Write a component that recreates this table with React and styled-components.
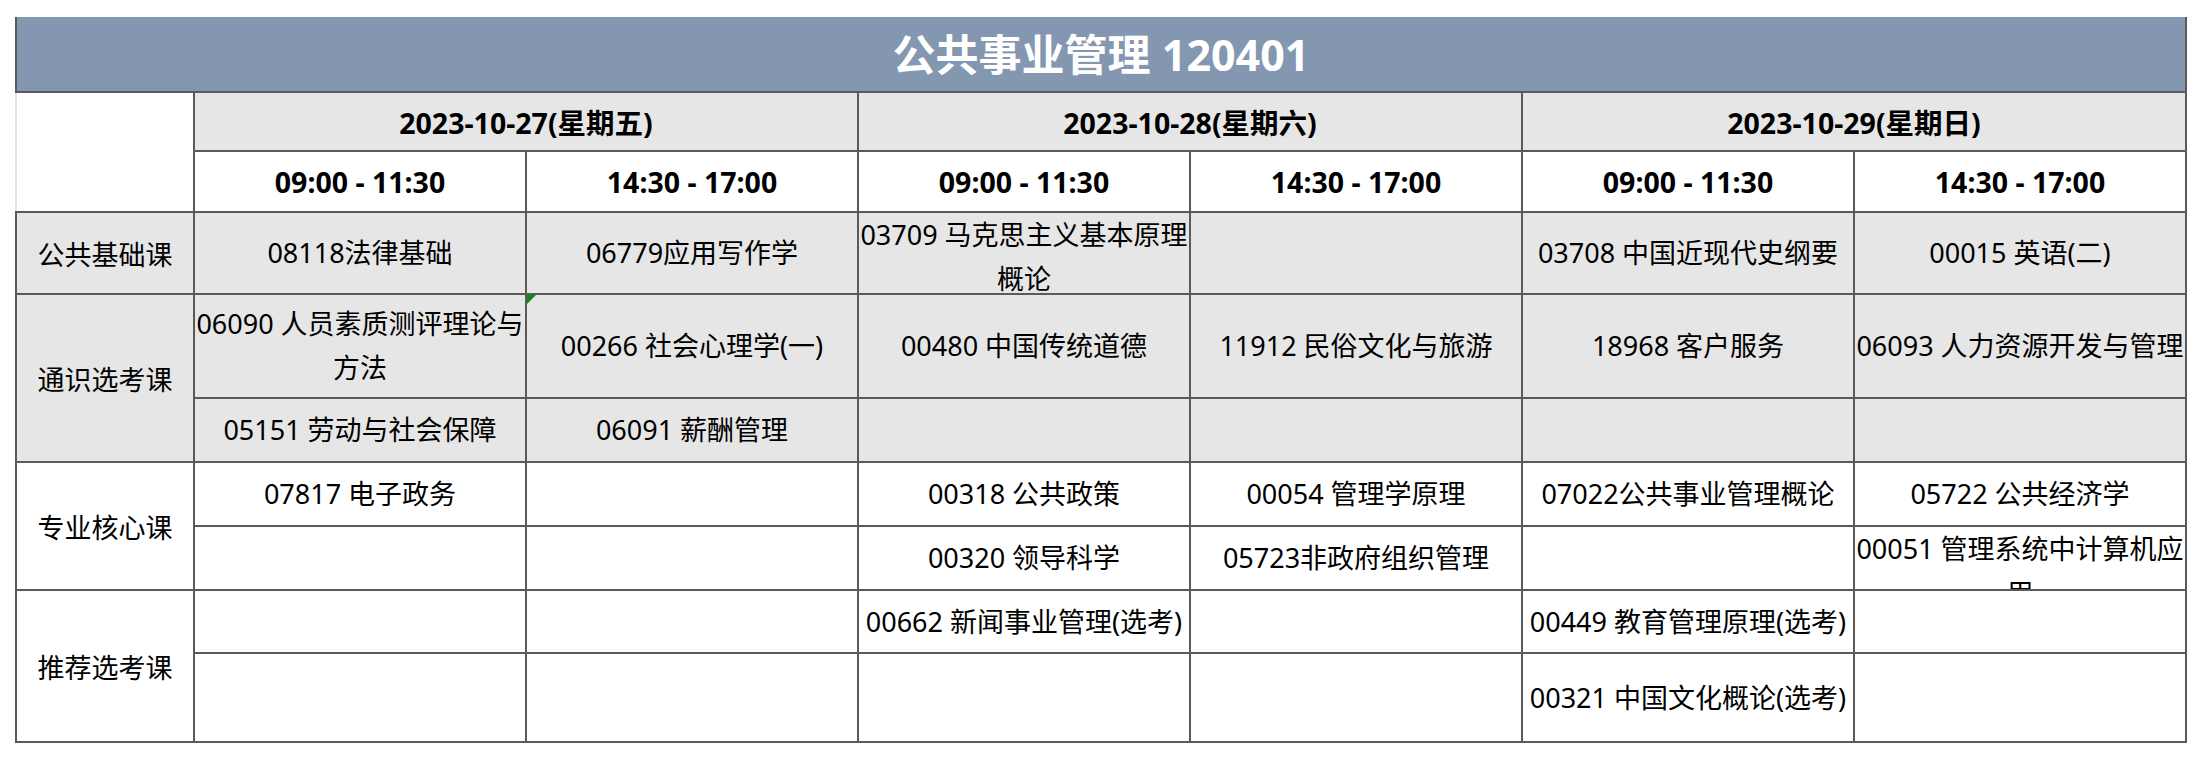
import React from 'react';
import styled, { createGlobalStyle } from 'styled-components';

const GlobalStyle = createGlobalStyle`
  body {
    margin: 0;
    background: #fff;
  }
`;

const FONT = `"Noto Sans", "Noto Sans CJK SC", sans-serif`;
const GREY = '#e7e6e6';

const Sheet = styled.div`
  margin: 17px 0 0 15px;
  width: 2172px;
  box-sizing: border-box;
  display: grid;
  grid-template-columns: 176px repeat(6, 330px);
  grid-template-rows: 74px 57px 59px 80px 102px 62px 62px 62px 61px 87px;
  gap: 2px;
  padding: 0 2px 2px;
  background: #5a5a5a;
  font-family: ${FONT};
  color: #000;
`;

const Title = styled.div`
  grid-column: 1 / -1;
  display: flex;
  align-items: center;
  justify-content: center;
  background: #8497b0;
  color: #fff;
  font-size: 43px;
  font-weight: 700;
  line-height: 1;
`;

const Corner = styled.div`
  grid-row: span 2;
  margin-left: -2px;
  border-left: 2px solid #e4e4e4;
  background: #fff;
`;

const Head = styled.div`
  grid-column: span ${p => p.$span || 1};
  display: flex;
  align-items: center;
  justify-content: center;
  background: ${p => (p.$shade ? GREY : '#fff')};
  font-size: 28.5px;
  font-weight: 700;
`;

const Label = styled.div`
  grid-row: span ${p => p.$span};
  display: flex;
  align-items: center;
  justify-content: center;
  background: ${p => (p.$shade ? GREY : '#fff')};
  font-size: 27px;
`;

const Cell = styled.div`
  position: relative;
  display: flex;
  overflow: hidden;
  background: ${p => (p.$shade ? GREY : '#fff')};
`;

const Text = styled.div`
  margin: auto;
  white-space: pre;
  text-align: center;
  font-size: 27px;
  line-height: 44px;
`;

const Flag = styled.span`
  position: absolute;
  top: 0;
  left: 0;
  width: 0;
  height: 0;
  border-top: 9px solid #108a10;
  border-right: 9px solid transparent;
`;

const days = ['2023-10-27(星期五)', '2023-10-28(星期六)', '2023-10-29(星期日)'];
const slots = ['09:00 - 11:30', '14:30 - 17:00'];

const sections = [
  {
    label: '公共基础课',
    shade: true,
    rows: [
      ['08118法律基础', '06779应用写作学', '03709 马克思主义基本原理\n概论', '', '03708 中国近现代史纲要', '00015 英语(二)'],
    ],
  },
  {
    label: '通识选考课',
    shade: true,
    rows: [
      ['06090 人员素质测评理论与\n方法', '00266 社会心理学(一)', '00480 中国传统道德', '11912 民俗文化与旅游', '18968 客户服务', '06093 人力资源开发与管理'],
      ['05151 劳动与社会保障', '06091 薪酬管理', '', '', '', ''],
    ],
  },
  {
    label: '专业核心课',
    rows: [
      ['07817 电子政务', '', '00318 公共政策', '00054 管理学原理', '07022公共事业管理概论', '05722 公共经济学'],
      ['', '', '00320 领导科学', '05723非政府组织管理', '', '00051 管理系统中计算机应\n用'],
    ],
  },
  {
    label: '推荐选考课',
    rows: [
      ['', '', '00662 新闻事业管理(选考)', '', '00449 教育管理原理(选考)', ''],
      ['', '', '', '', '00321 中国文化概论(选考)', ''],
    ],
  },
];

// cells flagged with Excel's green "number as text" marker
const flagged = ['00266 社会心理学(一)'];

export default function App() {
  return (
    <>
      <GlobalStyle />
      <Sheet>
        <Title>公共事业管理 120401</Title>
        <Corner />
        {days.map(d => (
          <Head key={d} $span={2} $shade>{d}</Head>
        ))}
        {days.map(d => slots.map(s => <Head key={d + s}>{s}</Head>))}
        {sections.map(sec => (
          <React.Fragment key={sec.label}>
            <Label $span={sec.rows.length} $shade={sec.shade}>{sec.label}</Label>
            {sec.rows.map((row, r) =>
              row.map((txt, c) => (
                <Cell key={`${sec.label}-${r}-${c}`} $shade={sec.shade}>
                  {flagged.includes(txt) && <Flag />}
                  {txt && <Text>{txt}</Text>}
                </Cell>
              ))
            )}
          </React.Fragment>
        ))}
      </Sheet>
    </>
  );
}
